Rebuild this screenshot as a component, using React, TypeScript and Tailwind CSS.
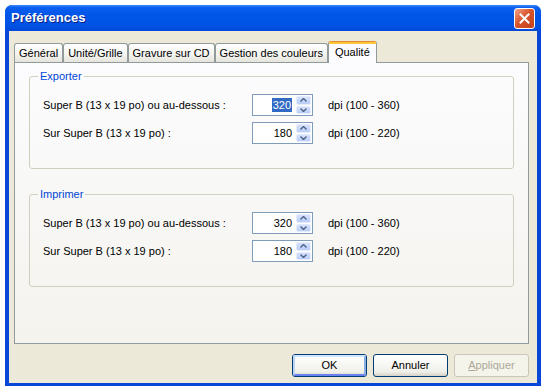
import React from 'react';

const font = { fontFamily: '"Liberation Sans", Arial, sans-serif' };

const tabs = ['Général', 'Unité/Grille', 'Gravure sur CD', 'Gestion des couleurs', 'Qualité'];

interface SpinProps {
  value: string;
  selected?: boolean;
}

const Spin: React.FC<SpinProps> = ({ value, selected }) => (
  <div className="flex h-[22px] w-[61px] border border-[#7f9db9] bg-white">
    <div className="flex flex-1 items-center justify-end pr-[4px]">
      <span className={selected ? 'bg-[#316ac5] px-px leading-[14px] text-white' : 'leading-[14px] text-black'}>{value}</span>
    </div>
    <div className="my-px mr-px flex w-[15px] flex-col gap-px">
      {['up', 'down'].map((dir) => (
        <div
          key={dir}
          className="flex flex-1 items-center justify-center rounded-[2px] border border-[#e3ebfd] bg-[linear-gradient(to_bottom,#d6e2fc,#b9cdf8)]"
        >
          <svg width="7" height="4" viewBox="0 0 7 4">
            <path
              d={dir === 'up' ? 'M0.5 3.5 L3.5 0.5 L6.5 3.5' : 'M0.5 0.5 L3.5 3.5 L6.5 0.5'}
              fill="none"
              stroke="#4d6185"
              strokeWidth="1.4"
            />
          </svg>
        </div>
      ))}
    </div>
  </div>
);

interface RowProps {
  label: string;
  value: string;
  range: string;
  selected?: boolean;
}

const Row: React.FC<RowProps> = ({ label, value, range, selected }) => (
  <div className="flex items-center">
    <span className="w-[209px]">{label}</span>
    <Spin value={value} selected={selected} />
    <span className="ml-[15px]">{range}</span>
  </div>
);

const Group: React.FC<{ title: string; children: React.ReactNode }> = ({ title, children }) => (
  <fieldset className="rounded-[3px] border border-[#d0d0bf] pb-[24px] pl-[13px] pt-[11px]">
    <legend className="-ml-[5px] px-[2px] leading-[13px] text-[#0046d5]">{title}</legend>
    <div className="flex flex-col gap-[6px]">{children}</div>
  </fieldset>
);

interface ButtonProps {
  label: React.ReactNode;
  primary?: boolean;
  disabled?: boolean;
}

const XpButton: React.FC<ButtonProps> = ({ label, primary, disabled }) => (
  <div
    className={
      disabled
        ? 'flex h-[23px] w-[75px] items-center justify-center rounded-[3px] border border-[#c9c7ba] bg-[#f5f4ea] text-[#aca899]'
        : 'flex h-[23px] w-[75px] items-center justify-center rounded-[3px] border border-[#003c74] bg-[linear-gradient(to_bottom,#ffffff,#f0f0ea_80%,#d6d0c5)] text-black'
    }
  >
    {primary ? (
      <div className="flex h-full w-full items-center justify-center rounded-[2px] border-2 border-t-[#cee7ff] border-l-[#bcd4f6] border-r-[#89ade4] border-b-[#6982ee]">
        {label}
      </div>
    ) : (
      label
    )}
  </div>
);

export default function App() {
  return (
    <div className="h-[387px] w-[542px] bg-white pl-[5px] pt-[5px] text-[11px]" style={font}>
      <div className="flex h-[381px] w-[536px] flex-col overflow-hidden rounded-t-[7px] bg-[#0846d8]">
        {/* title bar */}
        <div className="flex h-[26px] shrink-0 items-center justify-between bg-[linear-gradient(to_bottom,#3c8cf8_0%,#0a5ff0_10%,#0055e8_40%,#0052e3_80%,#0048d8_100%)] pl-[6px] pr-[6px]">
          <span className="text-[13px] font-bold text-white [text-shadow:1px_1px_0_#0a1e80]">Préférences</span>
          <div className="flex h-[21px] w-[21px] items-center justify-center rounded-[3px] border border-white bg-[linear-gradient(135deg,#f0a68a,#d8552e_45%,#c2401a)]">
            <svg width="11" height="11" viewBox="0 0 11 11">
              <path d="M1.5 1.5 L9.5 9.5 M9.5 1.5 L1.5 9.5" stroke="#ffffff" strokeWidth="2" strokeLinecap="square" />
            </svg>
          </div>
        </div>

        {/* client area */}
        <div className="mx-[4px] mb-[3px] flex flex-1 flex-col bg-[#ece9d8] pl-[5px] pr-[8px] pt-[9px]">
          <div className="flex h-[22px] items-end">
            {tabs.map((t) =>
              t === 'Qualité' ? (
                <div
                  key={t}
                  className="relative z-10 -mb-px flex h-[22px] flex-col rounded-t-[3px] border-x border-t border-x-[#919b9c] border-t-[#e68b2c] bg-[#fcfcfe]"
                >
                  <div className="h-[2px] bg-[#ffc73c]" />
                  <div className="flex flex-1 items-start px-[6px]">{t}</div>
                </div>
              ) : (
                <div
                  key={t}
                  className="flex h-[19px] items-center rounded-t-[3px] border-x border-t border-[#919b9c] bg-[linear-gradient(to_bottom,#ffffff,#f3f3ef_60%,#e5e4dc)] px-[4px]"
                >
                  {t}
                </div>
              ),
            )}
          </div>

          <div className="flex h-[282px] flex-col border border-[#919b9c] bg-[linear-gradient(to_bottom,#fcfcfe,#f4f3ee)] px-[14px] pt-[7px]">
            <Group title="Exporter">
              <Row label="Super B (13 x 19 po) ou au-dessous :" value="320" range="dpi (100 - 360)" selected />
              <Row label="Sur Super B (13 x 19 po) :" value="180" range="dpi (100 - 220)" />
            </Group>
            <div className="h-[19px]" />
            <Group title="Imprimer">
              <Row label="Super B (13 x 19 po) ou au-dessous :" value="320" range="dpi (100 - 360)" />
              <Row label="Sur Super B (13 x 19 po) :" value="180" range="dpi (100 - 220)" />
            </Group>
          </div>

          <div className="mt-[10px] flex justify-end gap-[6px]">
            <XpButton label="OK" primary />
            <XpButton label="Annuler" />
            <XpButton
              label={
                <span>
                  <span className="underline">A</span>ppliquer
                </span>
              }
              disabled
            />
          </div>
        </div>
      </div>
    </div>
  );
}
